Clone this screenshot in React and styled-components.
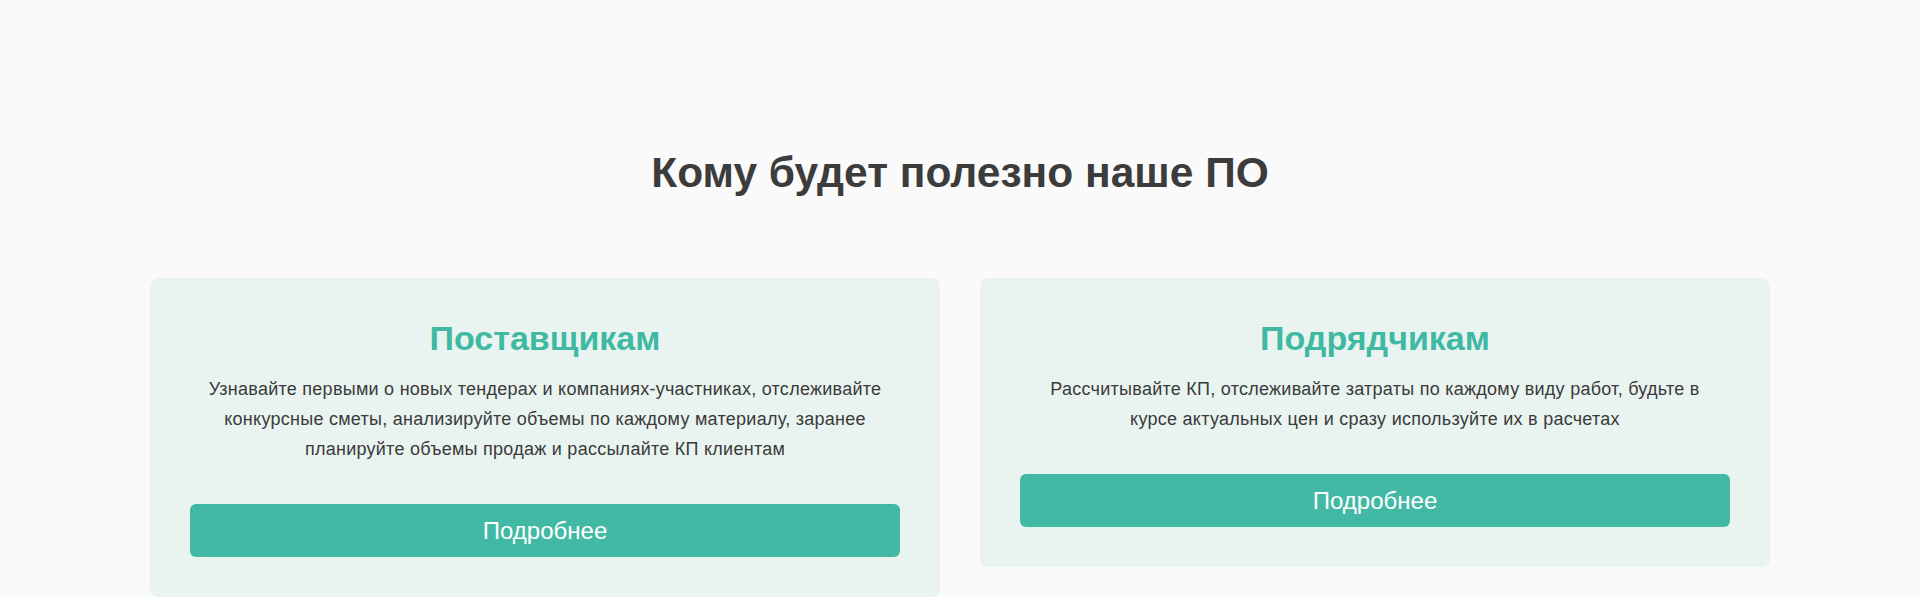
import styled, { createGlobalStyle } from "styled-components";

const GlobalStyle = createGlobalStyle`
  * {
    box-sizing: border-box;
  }
  body {
    margin: 0;
    background-color: #fafafa;
    font-family: "Liberation Sans", Arial, sans-serif;
  }
`;

const Section = styled.section`
  padding: 149px 150px 0;
  display: flex;
  flex-direction: column;
  align-items: center;
`;

const Title = styled.h2`
  margin: 0 0 81px;
  font-size: 42.5px;
  line-height: 48px;
  font-weight: 700;
  color: #3c3c3c;
  text-align: center;
`;

const Cards = styled.div`
  width: 100%;
  display: grid;
  grid-template-columns: 1fr 1fr;
  gap: 40px;
  align-items: start;
`;

const Card = styled.div`
  background-color: #e9f4f1;
  border-radius: 8px;
  padding: 40px;
  display: flex;
  flex-direction: column;
  align-items: center;
`;

const CardTitle = styled.h3`
  margin: 0 0 16px;
  font-size: 34px;
  line-height: 40px;
  font-weight: 700;
  color: #40b9a3;
  text-align: center;
`;

const CardText = styled.p`
  margin: 0 0 40px;
  max-width: 690px;
  font-size: 18px;
  letter-spacing: 0.26px;
  line-height: 30px;
  color: #3a3a3a;
  text-align: center;
`;

const Button = styled.button`
  width: 100%;
  height: 53px;
  border: none;
  border-radius: 6px;
  background-color: #42b9a5;
  color: #ffffff;
  font-family: inherit;
  font-size: 24px;
  cursor: pointer;

  &:hover {
    background-color: #38a894;
  }
`;

const audiences = [
  {
    title: "Поставщикам",
    text: "Узнавайте первыми о новых тендерах и компаниях-участниках, отслеживайте конкурсные сметы, анализируйте объемы по каждому материалу, заранее планируйте объемы продаж и рассылайте КП клиентам",
  },
  {
    title: "Подрядчикам",
    text: "Рассчитывайте КП, отслеживайте затраты по каждому виду работ, будьте в курсе актуальных цен и сразу используйте их в расчетах",
  },
];

const App = () => {
  return (
    <>
      <GlobalStyle />
      <Section>
        <Title>Кому будет полезно наше ПО</Title>
        <Cards>
          {audiences.map((item) => (
            <Card key={item.title}>
              <CardTitle>{item.title}</CardTitle>
              <CardText>{item.text}</CardText>
              <Button>Подробнее</Button>
            </Card>
          ))}
        </Cards>
      </Section>
    </>
  );
};

export default App;
